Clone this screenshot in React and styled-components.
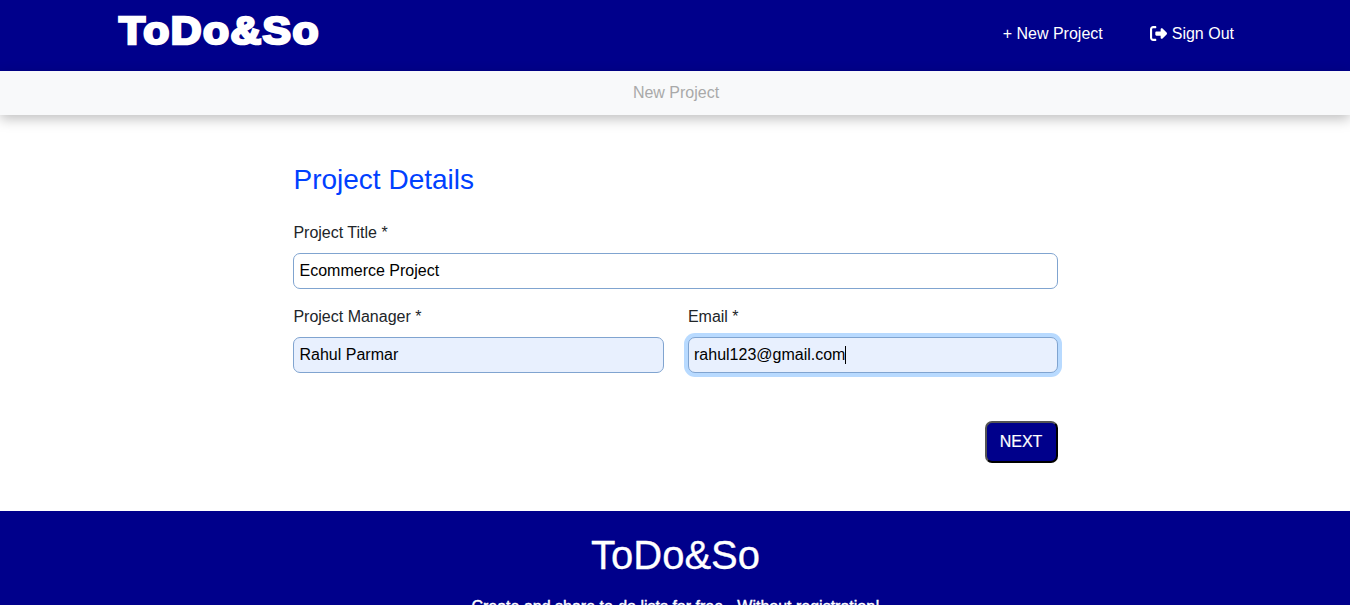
import React from 'react';
import styled, { createGlobalStyle } from 'styled-components';
import { FaRightFromBracket } from 'react-icons/fa6';

const GlobalStyle = createGlobalStyle`
  *, *::before, *::after { box-sizing: border-box; }
  html, body { height: 100%; overflow: hidden; }
  body {
    margin: 0;
    background: #fff;
    color: #212529;
    font: 16px/24px "Liberation Sans", Arial, sans-serif;
  }
`;

const Page = styled.div`
  height: 100vh;
  display: flex;
  flex-direction: column;
  overflow: hidden;
`;

const NavBar = styled.nav`
  flex: none;
  height: 71px;
  padding: 0 116px 0 119px;
  display: flex;
  justify-content: space-between;
  background: #00008b;
  color: #fff;
`;

const Brand = styled.a`
  padding-top: 1px;
  font: 700 38px/60px "Liberation Sans", "Arial Black", sans-serif;
  letter-spacing: 1.3px;
  -webkit-text-stroke: 2.6px #fff;
  transform: scaleX(1.12);
  transform-origin: left center;
`;

const NavLinks = styled.div`
  display: flex;
  gap: 47px;
  padding-top: 22px;
`;

const NavLink = styled.a`
  display: flex;
  height: 24px;
  white-space: pre;

  svg {
    margin: 3px 5px 0 0;
  }
`;

const SubBar = styled.div`
  flex: none;
  height: 44px;
  padding: 10px 0 0 2px;
  background: #f8f9fa;
  color: #a9a9a9;
  text-align: center;
  box-shadow: 0 4px 12px rgba(0, 0, 0, 0.25);
`;

const Form = styled.form`
  flex: none;
  width: 765px;
  height: 396px;
  margin: 0 0 0 293px;
  padding-top: 48px;
`;

const Heading = styled.h3`
  margin: 0 0 24px;
  padding-left: 0.5px;
  font-size: 28px;
  font-weight: 400;
  line-height: 34px;
  color: #0040ff;
`;

const FieldRow = styled.div`
  display: grid;
  grid-template-columns: ${(p) => (p.$split ? '1fr 1fr' : '1fr')};
  gap: 24px;
  margin-bottom: 16px;
`;

const Field = styled.label`
  display: flex;
  flex-direction: column;
  gap: 8px;
`;

const LabelText = styled.span`
  padding-left: 0.4px;
`;

const Input = styled.div`
  height: 36px;
  padding: 5px 5.5px;
  display: flex;
  align-items: center;
  border: 1px solid #80a4d0;
  border-radius: 7px;
  background: ${(p) => (p.$filled ? '#e8f0fe' : '#fff')};
  color: #000;
  box-shadow: ${(p) => (p.$focused ? '0 0 0 4px #b8daff' : 'none')};
`;

const Caret = styled.span`
  width: 1px;
  height: 18px;
  background: #000;
`;

const Actions = styled.div`
  display: flex;
  justify-content: flex-end;
  padding-top: 32px;
`;

const NextButton = styled.button`
  width: 73px;
  height: 42px;
  padding: 0 1px 0 0;
  border: 2px outset #000;
  border-radius: 7px;
  background: #00008b;
  color: #fff;
  font: 16px/24px "Liberation Sans", Arial, sans-serif;
  -webkit-text-stroke: 0.2px #fff;
`;

const Footer = styled.footer`
  flex: 1;
  min-height: 0;
  overflow: hidden;
  padding: 20px 0 0 1px;
  background: #00008b;
  color: #fff;
  text-align: center;
`;

const FooterBrand = styled.h1`
  margin: 0 0 16px;
  font-size: 40px;
  font-weight: 400;
  line-height: 48px;
  -webkit-text-stroke: 0.3px #fff;
`;

const Tagline = styled.p`
  margin: 0;
  -webkit-text-stroke: 0.4px #fff;
`;

export default function App() {
  return (
    <Page>
      <GlobalStyle />
      <NavBar>
        <Brand>ToDo&amp;So</Brand>
        <NavLinks>
          <NavLink>+ New Project</NavLink>
          <NavLink>
            <FaRightFromBracket size={17} />
            Sign Out
          </NavLink>
        </NavLinks>
      </NavBar>
      <SubBar>New Project</SubBar>
      <Form>
        <Heading>Project Details</Heading>
        <FieldRow>
          <Field>
            <LabelText>Project Title *</LabelText>
            <Input>Ecommerce Project</Input>
          </Field>
        </FieldRow>
        <FieldRow $split>
          <Field>
            <LabelText>Project Manager *</LabelText>
            <Input $filled>Rahul Parmar</Input>
          </Field>
          <Field>
            <LabelText>Email *</LabelText>
            <Input $filled $focused>
              rahul123@gmail.com
              <Caret />
            </Input>
          </Field>
        </FieldRow>
        <Actions>
          <NextButton type="button">NEXT</NextButton>
        </Actions>
      </Form>
      <Footer>
        <FooterBrand>ToDo&amp;So</FooterBrand>
        <Tagline>Create and share to-do lists for free - Without registration!</Tagline>
      </Footer>
    </Page>
  );
}
